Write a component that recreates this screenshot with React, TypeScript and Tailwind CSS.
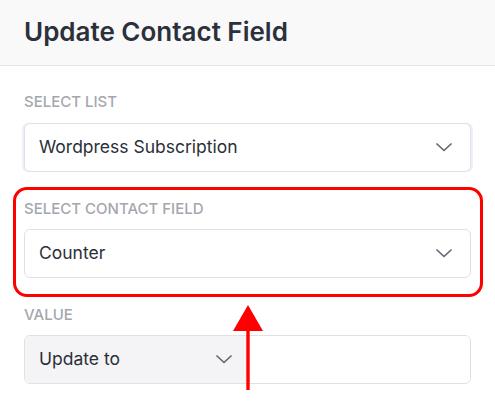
import React from "react";

function Chevron() {
  return (
    <svg width="16" height="9" viewBox="0 0 16 9" fill="none" className="shrink-0">
      <path d="M1 1l7 6.5L15 1" stroke="#646873" strokeWidth="1.7" strokeLinecap="round" strokeLinejoin="round" />
    </svg>
  );
}

function Label({ children }: { children: React.ReactNode }) {
  return (
    <div className="h-5 text-[15px] leading-5 font-medium uppercase text-[#a4a7ae]">
      {children}
    </div>
  );
}

function SelectBox({ value }: { value: string }) {
  return (
    <div className="h-[49px] rounded-md border border-[#e1e1e4] bg-white pl-[14px] pr-[18px] flex items-center justify-between text-[17.5px] text-[#2b2f38] shadow-[-2px_0_0_#efeffb,2px_0_0_#efeffb]">
      <span>{value}</span>
      <Chevron />
    </div>
  );
}

export default function App(): React.JSX.Element {
  return (
    <div className="w-[495px] h-[416px] bg-white overflow-hidden font-['Inter',sans-serif]">
      <div className="h-[66px] border-b border-[#e6e6e8] bg-[#f9f9f9] flex items-center px-6 pb-[2px]">
        <h1 className="text-[26px] leading-8 font-semibold text-[#2b303b]">Update Contact Field</h1>
      </div>

      <div className="px-6 pt-[26px] flex flex-col gap-[27px]">
        <div className="flex flex-col gap-[11px]">
          <Label>Select List</Label>
          <SelectBox value="Wordpress Subscription" />
        </div>

        <div className="relative flex flex-col gap-[10px]">
          <Label>Select Contact Field</Label>
          <div className="h-[49px] rounded-md border border-[#e1e1e4] bg-white pl-[14px] pr-[18px] flex items-center justify-between text-[17.5px] text-[#2b2f38]">
            <span>Counter</span>
            <Chevron />
          </div>
          {/* annotation highlight */}
          <div className="absolute -left-[11px] -right-[12px] -top-[12px] -bottom-[19px] rounded-[14px] border-[3px] border-[#ff0000]" />
        </div>

        <div className="relative flex flex-col gap-[10px]">
          <Label>Value</Label>
          <div className="h-[49px] rounded-md border border-[#e1e1e4] overflow-hidden grid grid-cols-2">
            <div className="bg-[#f4f4f6] pl-[14px] pr-4 flex items-center justify-between text-[17.5px] text-[#2b2f38]">
              <span>Update to</span>
              <Chevron />
            </div>
            <div className="bg-white" />
          </div>
          {/* annotation arrow */}
          <svg className="absolute left-[209px] top-0" width="30" height="86" viewBox="0 0 30 86">
            <polygon points="15,0 0,26 30,26" fill="#ff0000" />
            <rect x="13.3" y="25" width="3.4" height="60" fill="#ff0000" />
          </svg>
        </div>
      </div>
    </div>
  );
}
